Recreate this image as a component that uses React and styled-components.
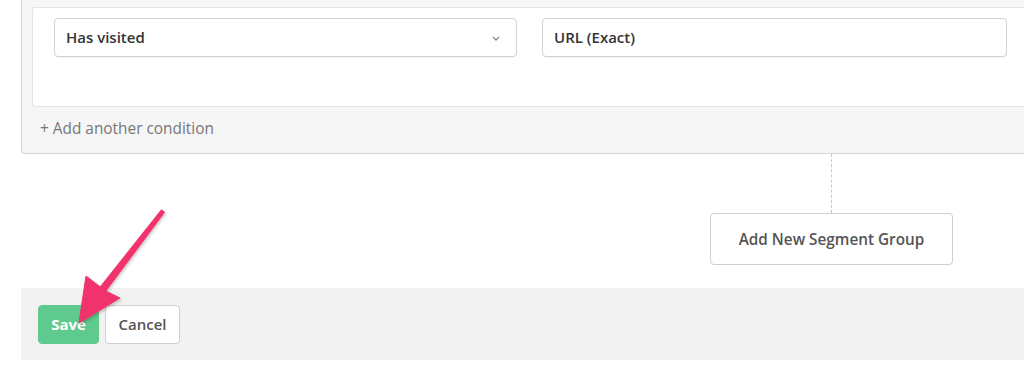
import React from "react";
import styled, { createGlobalStyle } from "styled-components";

const Global = createGlobalStyle`
  html, body { margin: 0; padding: 0; background: #ffffff; overflow: hidden; }
  body { font-family: "Open Sans", "Liberation Sans", sans-serif; }
`;

const Page = styled.div`
  position: relative;
  width: 1024px;
  height: 369px;
  padding-left: 21px;
  box-sizing: border-box;
  overflow: hidden;
`;

const ConditionCard = styled.div`
  margin-top: -1px;
  box-sizing: border-box;
  background: #f6f6f6;
  border: 1px solid #d6d6d6;
  border-top: none;
  border-right: none;
  border-radius: 0 0 0 4px;
  padding: 8px 0 0 10px;
`;

const ConditionBox = styled.div`
  height: 100px;
  box-sizing: border-box;
  background: #ffffff;
  border: 1px solid #e4e4e4;
  border-right: none;
  border-radius: 3px 0 0 3px;
  padding: 10px 0 10px 21px;
`;

const FieldRow = styled.div`
  display: grid;
  grid-template-columns: 463px 465px;
  column-gap: 25px;
`;

const Field = styled.div`
  height: 39px;
  box-sizing: border-box;
  border: 1px solid #d2d2d2;
  border-radius: 4px;
  background: #fff;
  display: flex;
  align-items: center;
  justify-content: space-between;
  padding: 0 16px 1px 11px;
  font-size: 15px;
  font-weight: 600;
  color: #333;
  box-shadow: 0 1px 1px rgba(0, 0, 0, 0.04);
`;

const Chevron = styled.svg`
  width: 8px;
  height: 5px;
  margin-top: 2px;
`;

const AddCondition = styled.div`
  height: 46px;
  box-sizing: border-box;
  display: flex;
  align-items: center;
  padding: 0 0 3px 8px;
  font-size: 15.4px;
  color: #777;
`;

const GroupColumn = styled.div`
  width: 243px;
  margin-left: 689px;
  display: flex;
  flex-direction: column;
  align-items: center;
`;

const Connector = styled.div`
  width: 0;
  height: 59px;
  border-left: 1px dashed #c8c8c8;
`;

const GroupButton = styled.button`
  width: 243px;
  height: 52px;
  box-sizing: border-box;
  border: 1px solid #cfcfcf;
  border-radius: 4px;
  background: #fff;
  font-family: "Open Sans", "Liberation Sans", sans-serif;
  font-size: 15.3px;
  font-weight: 600;
  color: #555;
  padding: 0 0 1px;
`;

const Footer = styled.div`
  margin-top: 23px;
  height: 72px;
  background: #f2f2f2;
  display: flex;
  align-items: center;
  gap: 6px;
  padding-left: 17px;
`;

const ActionButton = styled.button`
  height: 39px;
  box-sizing: border-box;
  border-radius: 4px;
  font-family: "Open Sans", "Liberation Sans", sans-serif;
  font-size: 15px;
  padding: 0;
  width: ${(p) => (p.$primary ? "61px" : "75px")};
  background: ${(p) => (p.$primary ? "#5fca8e" : "#ffffff")};
  color: ${(p) => (p.$primary ? "#ffffff" : "#555555")};
  border: 1px solid ${(p) => (p.$primary ? "#5fca8e" : "#cfcfcf")};
  font-weight: ${(p) => (p.$primary ? 700 : 600)};
`;

const ArrowOverlay = styled.svg`
  position: absolute;
  left: 0;
  top: 0;
  width: 1024px;
  height: 369px;
  pointer-events: none;
`;

export default function App() {
  return (
    <>
      <Global />
      <Page>
        <ConditionCard>
          <ConditionBox>
            <FieldRow>
              <Field>
                <span>Has visited</span>
                <Chevron viewBox="0 0 8 5">
                  <path d="M1 1 L4 4 L7 1" fill="none" stroke="#888" strokeWidth="1.3" />
                </Chevron>
              </Field>
              <Field>
                <span>URL (Exact)</span>
              </Field>
            </FieldRow>
          </ConditionBox>
          <AddCondition>+ Add another condition</AddCondition>
        </ConditionCard>
        <GroupColumn>
          <Connector />
          <GroupButton>Add New Segment Group</GroupButton>
        </GroupColumn>
        <Footer>
          <ActionButton $primary>Save</ActionButton>
          <ActionButton>Cancel</ActionButton>
        </Footer>
        <ArrowOverlay viewBox="0 0 1024 369">
          <defs>
            <filter id="sh" x="-20%" y="-20%" width="140%" height="140%">
              <feDropShadow dx="1" dy="1.5" stdDeviation="1.5" floodColor="#000" floodOpacity="0.25" />
            </filter>
          </defs>
          <polygon
            filter="url(#sh)"
            fill="#f1336c"
            points="161.4,209.8 100.2,286.9 86,276 79,323 120,298 105.8,291.1 164.6,212.2"
            strokeLinejoin="round"
            stroke="#f1336c"
            strokeWidth="1"
          />
        </ArrowOverlay>
      </Page>
    </>
  );
}
